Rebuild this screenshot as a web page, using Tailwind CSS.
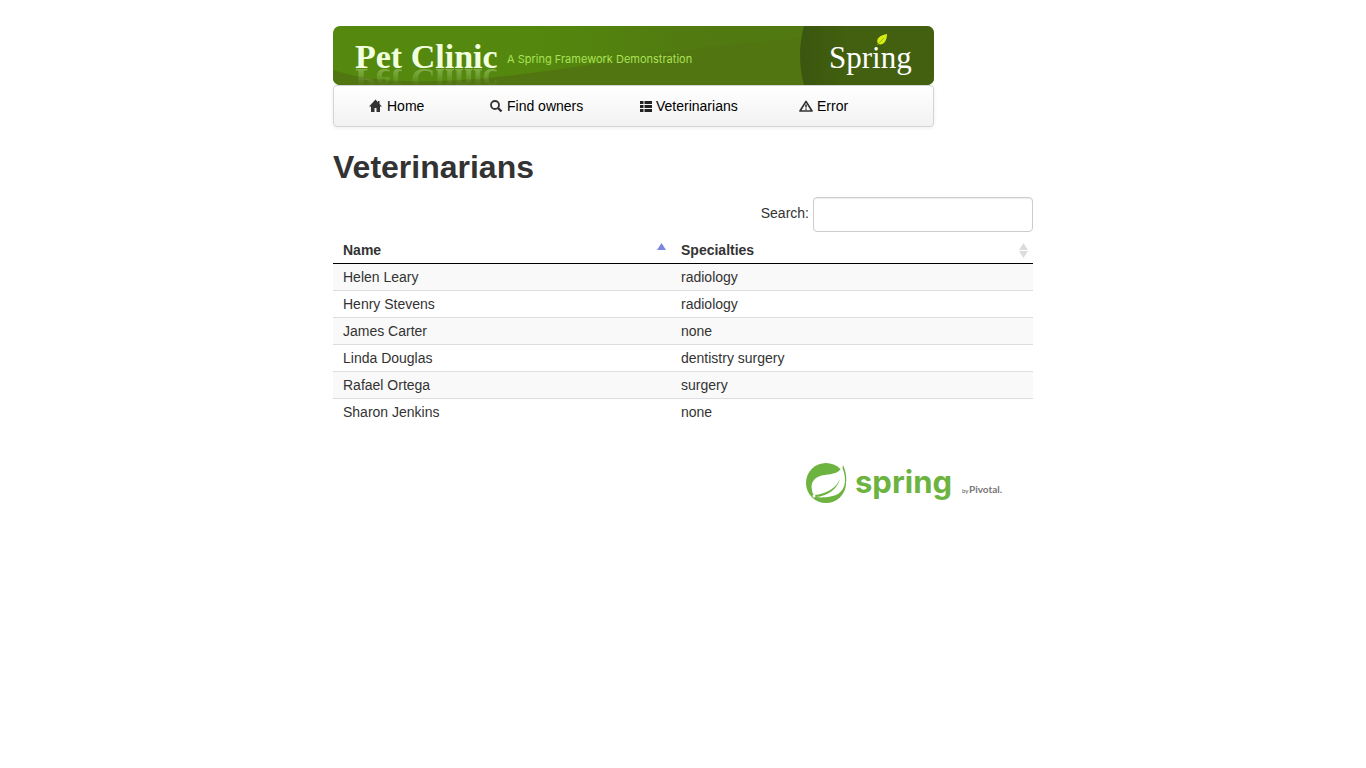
<!DOCTYPE html>
<html lang="en">
<head>
<meta charset="utf-8">
<meta name="viewport" content="width=device-width, initial-scale=1">
<title>PetClinic :: Veterinarians</title>
<script src="https://cdn.jsdelivr.net/npm/@tailwindcss/browser@4"></script>
</head>
<body class="bg-white font-['Liberation_Sans',Arial,sans-serif] text-sm text-[#333]">
<div class="mx-auto max-w-[700px] pt-[26px]">
  <header class="max-w-[601px]">
    <svg class="block w-full" viewBox="0 0 601 59" role="img" aria-label="Pet Clinic, a Spring Framework demonstration">
      <defs>
        <clipPath id="banner"><rect width="601" height="59" rx="7"/></clipPath>
        <linearGradient id="base" x1="0" x2="1" y1="0" y2="0">
          <stop offset="0" stop-color="#54890e"/><stop offset=".35" stop-color="#54870e"/><stop offset=".6" stop-color="#517a11"/><stop offset="1" stop-color="#517711"/>
        </linearGradient>
        <linearGradient id="disc" x1="467" x2="515" y1="0" y2="0" gradientUnits="userSpaceOnUse">
          <stop offset="0" stop-color="#3b560f"/><stop offset="1" stop-color="#42600f"/>
        </linearGradient>
        <linearGradient id="fade" x1="0" x2="0" y1="43" y2="57" gradientUnits="userSpaceOnUse">
          <stop offset="0" stop-color="#fff" stop-opacity=".35"/><stop offset="1" stop-color="#fff" stop-opacity=".04"/>
        </linearGradient>
        <mask id="reflection"><rect x="0" y="43" width="200" height="16" fill="url(#fade)"/></mask>
      </defs>
      <g clip-path="url(#banner)">
        <rect width="601" height="59" fill="url(#base)"/>
        <path d="M0 44C45 59 110 58 190 48C290 35 380 16 480 12V59H0Z" fill="#517611"/>
        <path d="M471 0H601V59H471Q463 29 471 0Z" fill="url(#disc)"/>
        <g mask="url(#reflection)" aria-hidden="true">
          <text x="22" y="-43" transform="scale(1 -1)" font-family="Liberation Serif, serif" font-weight="700" font-size="34" fill="#d9f3b5">Pet Clinic</text>
        </g>
        <text x="22" y="42" font-family="Liberation Serif, serif" font-weight="700" font-size="34" fill="#f1ffde">Pet Clinic</text>
        <text x="174" y="37" font-family="Inter, sans-serif" font-size="11" fill="#a9e254">A Spring Framework Demonstration</text>
        <text x="496" y="42" font-family="Liberation Serif, serif" font-size="31" fill="#fff">Spring</text>
        <path d="M545 18C542 12 548 9 554 8C554 14 551 20 545 18Z" fill="#d5ef12"/>
        <path d="M544 19L551 12" stroke="#8aa812" stroke-width=".8" fill="none"/>
      </g>
    </svg>
    <nav aria-label="Main" class="rounded border border-[#d4d4d4] bg-gradient-to-b from-white to-[#f2f2f2] pl-[35px] shadow-[0_1px_4px_rgba(0,0,0,0.07)]">
      <ul class="flex h-10 items-center text-black">
        <li class="w-[121px]"><a href="#" class="flex items-center gap-1">
          <svg class="size-[14px]" viewBox="0 0 14 14" fill="#333"><path d="M6.5 .5L0 7.5H2V13H5.5V9H7.5V13H11V7.5H13L10.5 5V2H9V3.3Z"/></svg>Home</a></li>
        <li class="w-[150px]"><a href="#" class="flex items-center gap-1">
          <svg class="size-[13px]" viewBox="0 0 13 13" fill="none" stroke="#333"><circle cx="5" cy="5" r="4" stroke-width="1.8"/><path d="M8 8L11.5 11.5" stroke-width="2.4"/></svg>Find owners</a></li>
        <li class="w-[159px]"><a href="#" class="flex items-center gap-1">
          <svg class="h-[11px] w-3" viewBox="0 0 12 11" fill="#222"><path d="M0 0H3.5V3H0ZM4.5 0H12V3H4.5ZM0 4H3.5V7H0ZM4.5 4H12V7H4.5ZM0 8H3.5V11H0ZM4.5 8H12V11H4.5Z"/></svg>Veterinarians</a></li>
        <li><a href="#" class="flex items-center gap-1">
          <svg class="h-3 w-[14px]" viewBox="0 0 14 12"><path d="M7 1.4L13 11H1Z" fill="none" stroke="#333" stroke-width="1.7" stroke-linejoin="round"/><path d="M6.2 4.5H7.8V7.6H6.2ZM6.2 8.4H7.8V9.8H6.2Z" fill="#333"/></svg>Error</a></li>
      </ul>
    </nav>
  </header>
  <main>
    <h1 class="mt-5 text-[32px] leading-10 font-bold">Veterinarians</h1>
    <div class="mt-[10px] flex items-center justify-end gap-1">
      <label for="search" class="pb-1">Search:</label>
      <input id="search" type="search" class="h-[35px] w-[220px] rounded border border-[#ccc] bg-white px-2 shadow-[inset_0_1px_1px_rgba(0,0,0,0.075)]">
    </div>
    <table class="mt-[5px] w-full table-fixed border-collapse text-left leading-5">
      <thead>
        <tr class="border-b border-black">
          <th class="w-[338px] px-[10px] py-[3px]"><div class="flex items-center justify-between">Name
            <svg class="-mr-[5px] h-4 w-[9px]" viewBox="0 0 9 16"><path d="M4.5 1L9 8H0Z" fill="#7e85e0"/></svg></div></th>
          <th class="px-[10px] py-[3px]"><div class="flex items-center justify-between">Specialties
            <svg class="-mr-[5px] h-4 w-[9px]" viewBox="0 0 9 16" fill="#dcdcdc"><path d="M4.5 1L9 8H0ZM0 9H9L4.5 16Z"/></svg></div></th>
        </tr>
      </thead>
      <tbody class="divide-y divide-[#ddd]">
        <tr class="bg-[#f9f9f9]"><td class="px-[10px] py-[3px]">Helen Leary</td><td class="px-[10px] py-[3px]">radiology</td></tr>
        <tr><td class="px-[10px] py-[3px]">Henry Stevens</td><td class="px-[10px] py-[3px]">radiology</td></tr>
        <tr class="bg-[#f9f9f9]"><td class="px-[10px] py-[3px]">James Carter</td><td class="px-[10px] py-[3px]">none</td></tr>
        <tr><td class="px-[10px] py-[3px]">Linda Douglas</td><td class="px-[10px] py-[3px]">dentistry surgery</td></tr>
        <tr class="bg-[#f9f9f9]"><td class="px-[10px] py-[3px]">Rafael Ortega</td><td class="px-[10px] py-[3px]">surgery</td></tr>
        <tr><td class="px-[10px] py-[3px]">Sharon Jenkins</td><td class="px-[10px] py-[3px]">none</td></tr>
      </tbody>
    </table>
  </main>
  <footer class="mt-9 flex justify-end pr-7">
    <svg class="h-[46px] w-[200px]" viewBox="0 0 200 46" role="img" aria-label="Spring by Pivotal">
      <circle cx="21" cy="22" r="20" fill="#6db33f"/>
      <path d="M38 2L43 2L42 14L39 10Z" fill="#fff"/>
      <path d="M38 4C43 15 42 25 37 31L33 29Z" fill="#6db33f"/>
      <path d="M37 6C34 12 28 13 20 14C10 15 5 21 7 29C7 31 8 33 9 34C22 33 31 27 35 18C32 29 22 35 11 36C17 37 28 36 33 33C41 28 42 17 37 6Z" fill="#fff"/>
      <circle cx="9" cy="35" r="1.5" fill="#fff"/>
      <text x="50" y="32" font-family="Inter, sans-serif" font-weight="700" font-size="31" fill="#6db33f">spring</text>
      <text x="157" y="32" font-family="Lato, sans-serif" font-size="6" fill="#555">by</text>
      <text x="164" y="32" font-family="Lato, sans-serif" font-weight="700" font-size="10" fill="#777">Pivotal.</text>
    </svg>
  </footer>
</div>
</body>
</html>
